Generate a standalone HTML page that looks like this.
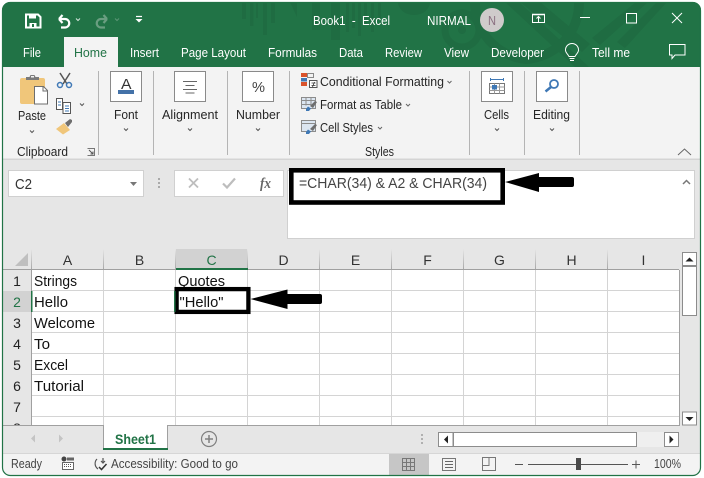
<!DOCTYPE html>
<html><head><meta charset="utf-8"><style>
html,body{margin:0;padding:0;background:#fff;width:704px;height:478px;overflow:hidden}
svg{display:block}
text{font-family:"Liberation Sans",sans-serif;font-size:13px;fill:#262626}
.w{fill:#fff}
.c{font-size:15px;fill:#111}
.h{font-size:14px;fill:#333;text-anchor:middle}
</style></head><body>
<svg width="704" height="478" viewBox="0 0 704 478" xmlns="http://www.w3.org/2000/svg">
<defs>
<clipPath id="win"><rect x="2" y="2" width="699" height="474" rx="8"/></clipPath>
<clipPath id="tb"><rect x="2" y="2" width="699" height="65"/></clipPath>
<clipPath id="gr"><rect x="3" y="270" width="676" height="155"/></clipPath>
<linearGradient id="sep" x1="0" y1="0" x2="0" y2="1"><stop offset="0" stop-color="#e6e6e6"/><stop offset="1" stop-color="#a8a8a8"/></linearGradient>
</defs>
<rect width="704" height="478" fill="#fff"/>
<g clip-path="url(#win)">
<rect x="2" y="2" width="699" height="474" fill="#e6e6e6"/>
<!-- title bar -->
<rect x="2" y="2" width="699" height="65" fill="#217346"/>
<g clip-path="url(#tb)" fill="#1f6c42">
<rect x="242" y="2" width="4" height="17"/><rect x="250" y="2" width="3.500" height="24"/><rect x="256" y="2" width="2" height="16"/><rect x="263" y="2" width="4" height="33"/><rect x="271" y="2" width="4" height="21"/>
<path d="M290 2h7v15z"/><rect x="312" y="2" width="8" height="28"/><rect x="331" y="2" width="9" height="38"/>
<rect x="346" y="2" width="3" height="30"/><rect x="352" y="2" width="3" height="26"/><rect x="358" y="2" width="3" height="34"/><rect x="364" y="2" width="3" height="22"/><rect x="371" y="2" width="3" height="30"/><rect x="378" y="2" width="3" height="18"/>
<path d="M398 2a16 13 0 0 0 32 0z"/>
<circle cx="462" cy="30" r="17" fill="none" stroke="#1f6c42" stroke-width="7"/>
<circle cx="462" cy="30" r="4"/>
<path d="M505 2l70 65h14l-70-65zM520 2l62 50 8-8-50-42zM600 45l48-43h-12l-44 36zM625 48l42-46h-10l-40 40z"/>
<path d="M470 2a62 62 0 0 0 56 62 62 62 0 0 0 58-62h-10a50 50 0 0 1-48 52 50 50 0 0 1-46-52z"/>
</g>
<!-- QAT -->
<path d="M26 14.500h12l2.500 2.500v10.500h-14.500z" fill="none" stroke="#fff" stroke-width="2"/>
<rect x="29" y="15" width="7" height="3.500" fill="#fff"/><rect x="29.500" y="23" width="7" height="4.500" fill="#fff"/><rect x="32" y="24" width="2" height="3" fill="#217346"/>
<path d="M59 19h6a4 4 0 0 1 0 8.500h-4M59 19l3.500-4M59 19l3.500 4" fill="none" stroke="#fff" stroke-width="2.200"/>
<path d="M76 18.500l2 2 2-2" fill="none" stroke="#d5e5dc" stroke-width="1"/>
<path d="M107 19h-6a4 4 0 0 0 0 8.500h4M107 19l-3.500-4M107 19l-3.500 4" fill="none" stroke="#6a9e81" stroke-width="2.200"/>
<path d="M115 18.500l2 2 2-2" fill="none" stroke="#5d9677" stroke-width="1"/>
<path d="M136 16.500h6" stroke="#fff" stroke-width="1.200"/><path d="M135.500 19h7l-3.500 3.500z" fill="#fff"/>
<text class="w" x="313" y="25" textLength="77" lengthAdjust="spacingAndGlyphs" xml:space="preserve">Book1  -  Excel</text>
<text class="w" x="427" y="25" textLength="44" lengthAdjust="spacingAndGlyphs">NIRMAL</text>
<circle cx="492" cy="20" r="12" fill="#cfcbcb"/>
<text x="488" y="25" textLength="8" lengthAdjust="spacingAndGlyphs" style="font-size:13px;fill:#8a6f80">N</text>
<!-- window controls -->
<rect x="532.500" y="14.500" width="12" height="8" fill="none" stroke="#fff"/><path d="M532 14.500h13" stroke="#fff" stroke-width="1.500"/><path d="M538.500 22v-5M536.500 18.500l2-2 2 2" fill="none" stroke="#fff"/>
<path d="M580 17.500h10" stroke="#fff"/>
<rect x="626.500" y="13.500" width="10" height="9.500" fill="none" stroke="#fff" stroke-width="1"/>
<path d="M672 13l10 10M682 13l-10 10" stroke="#fff" stroke-width="1"/>
<!-- tabs -->
<rect x="64" y="37" width="54" height="30" fill="#f3f3f3"/>
<text class="w" x="23" y="57" textLength="18" lengthAdjust="spacingAndGlyphs">File</text>
<text x="74" y="57" textLength="33" lengthAdjust="spacingAndGlyphs" style="fill:#217346">Home</text>
<text class="w" x="130" y="57" textLength="29" lengthAdjust="spacingAndGlyphs">Insert</text>
<text class="w" x="181" y="57" textLength="65" lengthAdjust="spacingAndGlyphs">Page Layout</text>
<text class="w" x="268" y="57" textLength="49" lengthAdjust="spacingAndGlyphs">Formulas</text>
<text class="w" x="339" y="57" textLength="24" lengthAdjust="spacingAndGlyphs">Data</text>
<text class="w" x="385" y="57" textLength="37" lengthAdjust="spacingAndGlyphs">Review</text>
<text class="w" x="444" y="57" textLength="25" lengthAdjust="spacingAndGlyphs">View</text>
<text class="w" x="491" y="57" textLength="53" lengthAdjust="spacingAndGlyphs">Developer</text>
<text class="w" x="592" y="57" textLength="38" lengthAdjust="spacingAndGlyphs">Tell me</text>
<path d="M569 56.500c-1-2.500-3.500-3.500-3.500-6.500a6.500 6.500 0 0 1 13 0c0 3-2.500 4-3.500 6.500zM569.500 58.500h5M570 60.500h4" fill="none" stroke="#fff"/>
<path d="M669.500 44.500h15.500v10.500h-10l-3 3.500v-3.500h-2.500z" fill="none" stroke="#fff"/>
<!-- ribbon -->
<rect x="2" y="67" width="699" height="92" fill="#f3f3f3"/>
<rect x="2" y="158.500" width="699" height="1.500" fill="#d4d4d4"/>
<g fill="#b4b4b4"><rect x="98" y="71" width="1" height="84"/><rect x="153" y="71" width="1" height="84"/><rect x="227" y="71" width="1" height="84"/><rect x="289" y="71" width="1" height="84"/><rect x="469" y="71" width="1" height="84"/><rect x="524" y="71" width="1" height="84"/><rect x="579" y="71" width="1" height="84"/></g>
<!-- clipboard group -->
<rect x="20" y="78" width="25" height="26" rx="2" fill="#f0c67a"/>
<path d="M26 80v-3h3.500l1-2h4l1 2h3.500v3z" fill="#7a7a7a"/><rect x="31" y="76" width="3" height="1.500" fill="#f3f3f3"/>
<path d="M34.500 86.500h9l4 4v13.500h-13z" fill="#fff" stroke="#6e6e6e"/><path d="M43 86.500v4.500h4.500" fill="none" stroke="#6e6e6e"/>
<text x="18" y="120" textLength="28" lengthAdjust="spacingAndGlyphs">Paste</text>
<path d="M30 130.500l2 2 2-2" fill="none" stroke="#555"/>
<path d="M60 73l7 11M70 73l-7 11" stroke="#555" stroke-width="1.500"/>
<circle cx="60" cy="85" r="2.500" fill="none" stroke="#3f78b5" stroke-width="1.500"/><circle cx="69" cy="85" r="2.500" fill="none" stroke="#3f78b5" stroke-width="1.500"/>
<path d="M56.500 98.500h6v11h-6zM63 102.500h7.500v11h-7.500z" fill="#fff" stroke="#555"/><path d="M58 102h3M58 105h3M65 106h4M65 108.500h4M65 111h4" stroke="#3f78b5"/>
<path d="M80 103.500l2 2 2-2" fill="none" stroke="#555"/>
<path d="M56 129l8-6 6 7-7 4.500z" fill="#f0c67a"/><path d="M65 123l5-4 2 1 0 2-4 5z" fill="#6e6e6e"/>
<text x="17" y="156" textLength="51" lengthAdjust="spacingAndGlyphs">Clipboard</text>
<path d="M87.500 148.500h7v7h-7" fill="none" stroke="#777" stroke-width="1"/><path d="M89 150l4 4M93 151.500v2.500h-2.500" fill="none" stroke="#555"/>
<!-- boxes -->
<g fill="#fff" stroke="#8a8a8a"><rect x="110.500" y="71.500" width="31" height="30"/><rect x="174.500" y="71.500" width="31" height="30"/><rect x="242.500" y="71.500" width="31" height="30"/><rect x="481.500" y="71.500" width="31" height="30"/><rect x="536.500" y="71.500" width="31" height="30"/></g>
<text x="121" y="89" textLength="10.500" lengthAdjust="spacingAndGlyphs" style="font-size:15px;fill:#333">A</text>
<rect x="118" y="90" width="16" height="4" fill="#4472a8"/>
<path d="M183 81.500h14M185.500 85.500h9M183 89.500h14M185.500 93h9" stroke="#666"/>
<text x="252" y="92" textLength="13" lengthAdjust="spacingAndGlyphs" style="font-size:15px;fill:#444">%</text>
<text x="114" y="119" textLength="24" lengthAdjust="spacingAndGlyphs">Font</text>
<text x="162" y="119" textLength="56" lengthAdjust="spacingAndGlyphs">Alignment</text>
<text x="236" y="119" textLength="44" lengthAdjust="spacingAndGlyphs">Number</text>
<text x="484" y="119" textLength="25" lengthAdjust="spacingAndGlyphs">Cells</text>
<text x="533" y="119" textLength="37" lengthAdjust="spacingAndGlyphs">Editing</text>
<g fill="none" stroke="#555"><path d="M124 128.500l2 2 2-2M188 128.500l2 2 2-2M256 128.500l2 2 2-2M495 128.500l2 2 2-2M550 128.500l2 2 2-2"/></g>
<!-- styles -->
<rect x="301" y="73" width="6" height="4" fill="#d9532c"/><rect x="301" y="78" width="6" height="3.500" fill="#3f78b5"/><rect x="301" y="82" width="6" height="4" fill="#d9532c"/>
<path d="M307.500 73.500h6v4h-6z" fill="none" stroke="#888"/>
<rect x="309.500" y="80.500" width="7.500" height="7" fill="#fff" stroke="#555"/><path d="M311.500 83h4M311.500 85.500h4M314.500 82l-2 5" stroke="#333" stroke-width=".8"/>
<text x="320" y="86" textLength="124" lengthAdjust="spacingAndGlyphs">Conditional Formatting</text>
<path d="M447.500 81l2 2 2-2" fill="none" stroke="#666"/>
<g fill="#dce6f1" stroke="#8c8c8c"><rect x="301.500" y="97.500" width="14" height="11"/><rect x="301.500" y="120.500" width="14" height="11"/></g>
<path d="M301.500 100.500h14M301.500 104.500h10M306 97.500v8M311 97.500v8M301.500 123.500h14" stroke="#8c8c8c" fill="none"/>
<path d="M306 109l2-2.500 3 2-2 2.500h-3zM306 132l2-2.500 3 2-2 2.500h-3z" fill="#3f78b5"/>
<path d="M310 106l5-5 2 1-4 6zM310 129l5-5 2 1-4 6z" fill="#6e6e6e"/>
<text x="320" y="109" textLength="82" lengthAdjust="spacingAndGlyphs">Format as Table</text>
<path d="M406 104l2 2 2-2" fill="none" stroke="#666"/>
<text x="320" y="132" textLength="53" lengthAdjust="spacingAndGlyphs">Cell Styles</text>
<path d="M378 127l2 2 2-2" fill="none" stroke="#666"/>
<text x="365" y="156" textLength="29" lengthAdjust="spacingAndGlyphs">Styles</text>
<!-- cells icon -->
<path d="M490.500 79.500h13M490.500 78v3M503.500 78v3" stroke="#3f78b5" fill="none"/>
<rect x="489.500" y="83.500" width="15" height="10" fill="#fff" stroke="#777"/>
<path d="M489.500 87h15M489.500 90.500h15M494.500 83.500v10M499.500 83.500v10" stroke="#999"/>
<rect x="492" y="85" width="5" height="4.500" fill="#3f78b5"/>
<!-- editing icon -->
<circle cx="554" cy="84" r="4" fill="#fff" stroke="#3f78b5" stroke-width="1.800"/><path d="M551 87l-5.500 4.500" stroke="#3f78b5" stroke-width="2.500"/>
<path d="M678 155l6.500-6 6.500 6" fill="none" stroke="#666"/>
<!-- formula bar -->
<rect x="8.500" y="170.500" width="135" height="26" fill="#fff" stroke="#d0d0d0"/>
<text x="15" y="189" textLength="17" lengthAdjust="spacingAndGlyphs" style="font-size:14.500px;fill:#333">C2</text>
<path d="M130 182h7l-3.500 4z" fill="#777"/>
<g fill="#aaa"><rect x="158" y="178" width="2" height="2"/><rect x="158" y="182" width="2" height="2"/><rect x="158" y="186" width="2" height="2"/></g>
<rect x="174.500" y="170.500" width="109" height="26" fill="#fff" stroke="#d0d0d0"/>
<path d="M189 178.500l9 9M198 178.500l-9 9" stroke="#bdbdbd" stroke-width="1.800"/>
<path d="M223 183.500l4 4 8-9" fill="none" stroke="#bdbdbd" stroke-width="2.200"/>
<text x="260" y="188" textLength="11" lengthAdjust="spacingAndGlyphs" style="font-family:'Liberation Serif',serif;font-style:italic;font-weight:bold;font-size:15px;fill:#666">fx</text>
<rect x="287.500" y="170.500" width="407" height="68" fill="#fff" stroke="#d0d0d0"/>
<path d="M683 184l3.500-3.500 3.500 3.500" fill="none" stroke="#777" stroke-width="1.500"/>
<text x="299" y="188" textLength="188" lengthAdjust="spacingAndGlyphs" style="font-size:14.500px;fill:#444">=CHAR(34) &amp; A2 &amp; CHAR(34)</text>
<rect x="291.300" y="170.300" width="211.400" height="32.200" fill="none" stroke="#000" stroke-width="4.600"/>
<path d="M505 182l34-9v4h33a2 2 0 0 1 2 2v6a2 2 0 0 1-2 2h-33v5z" fill="#000"/>
<!-- column headers -->
<rect x="3" y="249" width="676" height="21" fill="#e6e6e6"/>
<rect x="176" y="249" width="72" height="20" fill="#d2d2d2"/>
<g fill="url(#sep)"><rect x="31" y="249" width="1" height="20"/><rect x="103" y="249" width="1" height="20"/><rect x="175" y="249" width="1" height="20"/><rect x="247" y="249" width="1" height="20"/><rect x="319" y="249" width="1" height="20"/><rect x="391" y="249" width="1" height="20"/><rect x="463" y="249" width="1" height="20"/><rect x="535" y="249" width="1" height="20"/><rect x="607" y="249" width="1" height="20"/></g>
<path d="M28 253v13h-13z" fill="#bfbfbf"/>
<rect x="3" y="269" width="676" height="1" fill="#a0a0a0"/>
<rect x="176" y="268" width="72" height="2" fill="#217346"/>
<text class="h" x="67.500" y="265">A</text><text class="h" x="139.500" y="265">B</text><text class="h" x="211.500" y="265" style="fill:#217346">C</text><text class="h" x="283.500" y="265">D</text><text class="h" x="355.500" y="265">E</text><text class="h" x="427.500" y="265">F</text><text class="h" x="499.500" y="265">G</text><text class="h" x="571.500" y="265">H</text><text class="h" x="643.500" y="265">I</text>
<!-- grid -->
<rect x="3" y="270" width="28" height="155" fill="#e6e6e6"/>
<rect x="3" y="291" width="28" height="21" fill="#d2d2d2"/>
<rect x="32" y="270" width="647" height="155" fill="#fff"/>
<g clip-path="url(#gr)">
<g fill="#d4d4d4">
<rect x="32" y="290" width="647" height="1"/><rect x="32" y="311" width="647" height="1"/><rect x="32" y="332" width="647" height="1"/><rect x="32" y="353" width="647" height="1"/><rect x="32" y="374" width="647" height="1"/><rect x="32" y="395" width="647" height="1"/><rect x="32" y="416" width="647" height="1"/>
<rect x="103" y="270" width="1" height="155"/><rect x="175" y="270" width="1" height="155"/><rect x="247" y="270" width="1" height="155"/><rect x="319" y="270" width="1" height="155"/><rect x="391" y="270" width="1" height="155"/><rect x="463" y="270" width="1" height="155"/><rect x="535" y="270" width="1" height="155"/><rect x="607" y="270" width="1" height="155"/>
</g>
<rect x="31" y="270" width="1" height="155" fill="#a0a0a0"/>
<rect x="31" y="291" width="1.500" height="21" fill="#217346"/>
<g>
<text class="h" x="17" y="286" style="fill:#222">1</text><text class="h" x="17" y="307" style="fill:#217346">2</text><text class="h" x="17" y="328" style="fill:#222">3</text><text class="h" x="17" y="349" style="fill:#222">4</text><text class="h" x="17" y="370" style="fill:#222">5</text><text class="h" x="17" y="391" style="fill:#222">6</text><text class="h" x="17" y="412" style="fill:#222">7</text><text class="h" x="17" y="433" style="fill:#222">8</text>
</g>
<text class="c" x="34" y="286" textLength="43" lengthAdjust="spacingAndGlyphs">Strings</text>
<text class="c" x="34" y="307" textLength="34" lengthAdjust="spacingAndGlyphs">Hello</text>
<text class="c" x="34" y="328" textLength="61" lengthAdjust="spacingAndGlyphs">Welcome</text>
<text class="c" x="34" y="349" textLength="16" lengthAdjust="spacingAndGlyphs">To</text>
<text class="c" x="34" y="370" textLength="34" lengthAdjust="spacingAndGlyphs">Excel</text>
<text class="c" x="34" y="391" textLength="50" lengthAdjust="spacingAndGlyphs">Tutorial</text>
<text class="c" x="178" y="286" textLength="47" lengthAdjust="spacingAndGlyphs">Quotes</text>
<text class="c" x="179.500" y="307" textLength="44" lengthAdjust="spacingAndGlyphs">"Hello"</text>
</g>
<rect x="176.600" y="289.100" width="71.800" height="22.800" fill="none" stroke="#000" stroke-width="4.300"/>
<rect x="174" y="291" width="1.500" height="21" fill="#217346"/>
<path d="M250.500 299l37-9.500v4.500h32.500a2 2 0 0 1 2 2v6a2 2 0 0 1-2 2h-32.500v5z" fill="#000"/>
<!-- frame lines -->
<rect x="679" y="270" width="1" height="155" fill="#a0a0a0"/>
<rect x="3" y="425" width="677" height="1" fill="#a0a0a0"/>
<!-- vertical scrollbar -->
<rect x="682.500" y="252.500" width="14" height="13" fill="#fff" stroke="#8c8c8c"/><path d="M685.500 261.500h8l-4-4z" fill="#222"/>
<rect x="682.500" y="266.500" width="14" height="49" fill="#fff" stroke="#8c8c8c"/>
<rect x="682.500" y="412" width="14" height="13" fill="#fff" stroke="#8c8c8c"/><path d="M685.500 417h8l-4 4z" fill="#222"/>
<!-- sheet tab strip -->
<path d="M35 434.500v8l-4-4zM59 434.500v8l4-4z" fill="#c4c4c4"/>
<path d="M103.500 426v23M167.500 426v23" stroke="#a0a0a0"/>
<rect x="104" y="425" width="63" height="23" fill="#fff"/>
<rect x="103" y="448" width="65" height="2" fill="#217346"/>
<text x="115" y="444" textLength="41" lengthAdjust="spacingAndGlyphs" style="font-weight:bold;font-size:14px;fill:#217346">Sheet1</text>
<circle cx="209" cy="439" r="7.500" fill="none" stroke="#808080" stroke-width="1.200"/><path d="M205 439h8M209 435v8" stroke="#808080" stroke-width="1.500"/>
<g fill="#b0b0b0"><rect x="421" y="434" width="2" height="2"/><rect x="421" y="438" width="2" height="2"/><rect x="421" y="442" width="2" height="2"/></g>
<!-- h scrollbar -->
<rect x="637" y="432" width="28" height="15" fill="#efefef"/>
<rect x="453.500" y="432.500" width="183" height="14" fill="#fff" stroke="#8c8c8c"/>
<rect x="438.500" y="432.500" width="14.500" height="14" fill="#fff" stroke="#8c8c8c"/><path d="M448 435.500v8l-4-4z" fill="#222"/>
<rect x="664.500" y="432.500" width="14" height="14" fill="#fff" stroke="#8c8c8c"/><path d="M669.500 435.500v8l4-4z" fill="#222"/>
<!-- status bar -->
<rect x="2" y="453" width="699" height="23" fill="#f3f3f3"/>
<rect x="2" y="453" width="699" height="1" fill="#d6d6d6"/>
<text x="11" y="468" textLength="31" lengthAdjust="spacingAndGlyphs" style="font-size:12.500px;fill:#444">Ready</text>
<circle cx="64" cy="459" r="2.500" fill="#444"/><path d="M67 457.500h7v3h-7z" fill="#666"/><rect x="62.500" y="462.500" width="11" height="7" fill="#fff" stroke="#666"/><path d="M64 464.500h8M64 466.500h8" stroke="#555" stroke-dasharray="1 1"/>
<path d="M97 459a6.500 6.500 0 0 0 1 10M103 458v4.500M101 461l2 2 2-2" fill="none" stroke="#555" stroke-width="1.200"/><path d="M99 467l2.500 2.500 5-5.500" fill="none" stroke="#333" stroke-width="1.500"/>
<text x="111" y="468" textLength="127" lengthAdjust="spacingAndGlyphs" style="font-size:12.500px;fill:#444">Accessibility: Good to go</text>
<rect x="389" y="454" width="40" height="21" fill="#c6c6c6"/>
<g fill="none" stroke="#777"><path d="M402.500 458.500h12v12h-12zM402.500 462.500h12M402.500 466.500h12M406.500 458.500v12M410.500 458.500v12"/>
<rect x="442.500" y="458.500" width="13" height="12"/><path d="M445 461.500h8M445 464.500h8M445 467.500h8" stroke="#666"/>
<path d="M482.500 457.500h13v13h-13zM482.500 465.500h6.500v-8"/></g>
<path d="M515 464.500h8M528 464.500h100M632 464.500h8M636 460.500v8" stroke="#555" stroke-width="1"/>
<rect x="576" y="458" width="5" height="12" fill="#4a4a4a"/>
<text x="654" y="468" textLength="27" lengthAdjust="spacingAndGlyphs" style="font-size:12.500px;fill:#444">100%</text>
</g>
<!-- window border -->
<rect x="2.500" y="2.500" width="698" height="473" rx="8" fill="none" stroke="#217346" stroke-width="1.200"/>
</svg>
</body></html>
